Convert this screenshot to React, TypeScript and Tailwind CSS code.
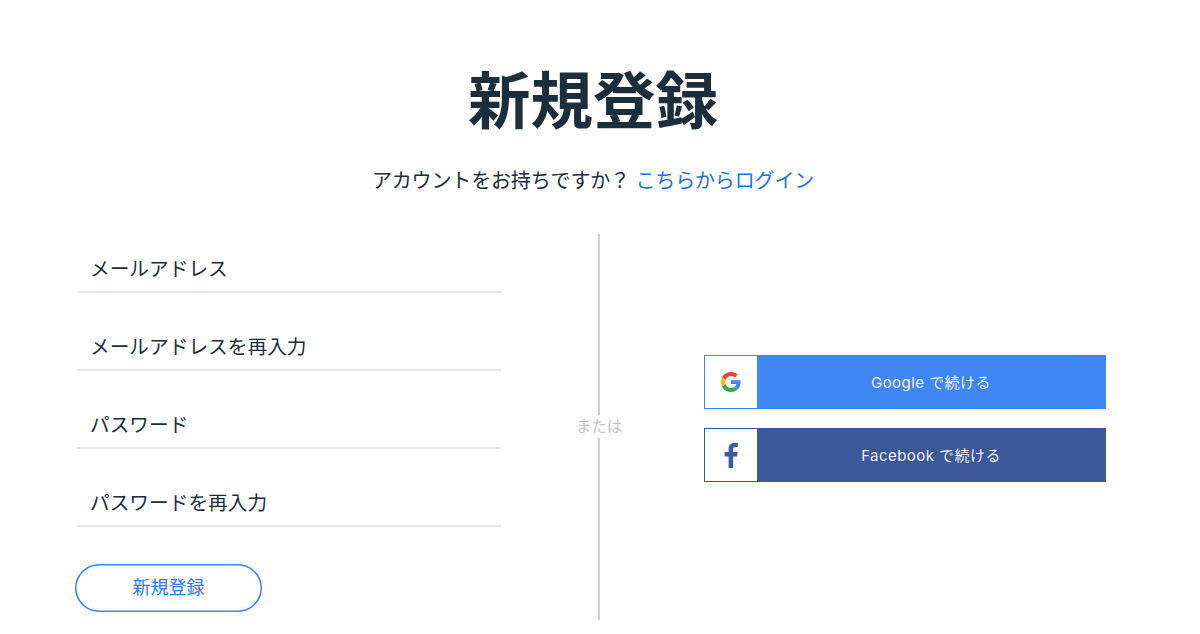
import React from "react";

const fields = ["メールアドレス", "メールアドレスを再入力", "パスワード", "パスワードを再入力"];

function GoogleG() {
  return (
    <svg width="20" height="20" viewBox="0 0 48 48" aria-hidden="true">
      <path fill="#EA4335" d="M24 9.5c3.54 0 6.71 1.22 9.21 3.6l6.85-6.85C35.9 2.38 30.47 0 24 0 14.62 0 6.51 5.38 2.56 13.22l7.98 6.19C12.43 13.72 17.74 9.5 24 9.5z" />
      <path fill="#4285F4" d="M46.98 24.55c0-1.57-.15-3.09-.38-4.55H24v9.02h12.94c-.58 2.96-2.26 5.48-4.78 7.18l7.73 6c4.51-4.18 7.09-10.36 7.09-17.65z" />
      <path fill="#FBBC05" d="M10.53 28.59c-.48-1.45-.76-2.99-.76-4.59s.27-3.14.76-4.59l-7.98-6.19C.92 16.46 0 20.12 0 24c0 3.88.92 7.54 2.56 10.78l7.97-6.19z" />
      <path fill="#34A853" d="M24 48c6.48 0 11.93-2.13 15.89-5.81l-7.73-6c-2.15 1.45-4.92 2.3-8.16 2.3-6.26 0-11.57-4.22-13.47-9.91l-7.98 6.19C6.51 42.62 14.62 48 24 48z" />
    </svg>
  );
}

function FacebookF() {
  return (
    <svg width="14" height="26" viewBox="0 0 14 26" aria-hidden="true">
      <path fill="#3b5ba5" d="M9.2 26V14.6h3.9l.6-4.5H9.2V7.3c0-1.3.4-2.2 2.2-2.2h2.4V1.1C13.4 1 12 .9 10.4.9 7 .9 4.6 3 4.6 6.8v3.3H.6v4.5h4V26z" />
    </svg>
  );
}

function SocialButton({ label, border, bg, icon }: { label: string; border: string; bg: string; icon: React.ReactNode }) {
  return (
    <button className={`flex h-[54px] w-[402px] border ${border} ${bg}`}>
      <span className="flex h-full w-[52px] items-center justify-center bg-white">{icon}</span>
      <span className="flex h-full flex-1 items-center justify-center pt-[2px] text-[15px] tracking-[0.45px] text-white/95">{label}</span>
    </button>
  );
}

export default function App() {
  return (
    <div className="h-[634px] w-[1200px] overflow-hidden bg-white font-['Inter','Noto_Sans_CJK_JP',sans-serif] text-[#1c2d3c]">
      <header className="flex flex-col items-center pr-[14px] pt-[62px]">
        <h1 className="text-[62.5px] leading-[78px] font-bold">新規登録</h1>
        <p className="mt-[26px] text-[20px] leading-[30px] tracking-[-0.15px]">
          アカウントをお持ちですか？ <a className="text-[#1f6ff2]">こちらからログイン</a>
        </p>
      </header>

      <main className="mt-[38px] flex h-[386px]">
        <form className="ml-[75px] flex w-[426px] flex-col">
          {fields.map((f) => (
            <label key={f} className="mb-[19px] ml-[2px] flex h-[59px] items-center border-b-2 border-[#e6e6e6] pl-[13px] pt-[15px] text-[19.7px] text-[#1c2d3c]">
              {f}
            </label>
          ))}
          <button type="button" className="mt-[18px] h-[48px] w-[187px] rounded-full pb-[2px] text-[18px] text-[#2b7bf5] shadow-[inset_0_0_0_1.5px_#3b85f6]">
            新規登録
          </button>
        </form>

        <div className="ml-[97px] flex w-[2px] flex-col items-center">
          <div className="h-[181px] w-[2px] shrink-0 bg-[#d0d0d0]" />
          <div className="flex h-[23px] shrink-0 items-center whitespace-nowrap text-[15.5px] text-[#c4c4c4]">または</div>
          <div className="w-[2px] flex-1 bg-[#d0d0d0]" />
        </div>

        <div className="ml-[104px] flex flex-col gap-[19px] pt-[121px]">
          <SocialButton label="Google で続ける" border="border-[#4285f4]" bg="bg-[#4285f4]" icon={<GoogleG />} />
          <SocialButton label="Facebook で続ける" border="border-[#3b5998]" bg="bg-[#3b5998]" icon={<FacebookF />} />
        </div>
      </main>
    </div>
  );
}
